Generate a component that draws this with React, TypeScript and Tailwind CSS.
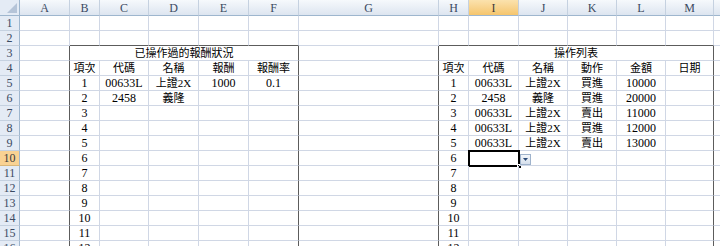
import React from "react";

const COLS = ["A", "B", "C", "D", "E", "F", "G", "H", "I", "J", "K", "L", "M", ""];
const ROWS = Array.from({ length: 16 }, (_, i) => i + 1);

const data: Record<string, string> = {
  B4: "項次", C4: "代碼", D4: "名稱", E4: "報酬", F4: "報酬率",
  B5: "1", C5: "00633L", D5: "上證2X", E5: "1000", F5: "0.1",
  B6: "2", C6: "2458", D6: "義隆",
  H4: "項次", I4: "代碼", J4: "名稱", K4: "動作", L4: "金額", M4: "日期",
  H5: "1", I5: "00633L", J5: "上證2X", K5: "買進", L5: "10000",
  H6: "2", I6: "2458", J6: "義隆", K6: "買進", L6: "20000",
  H7: "3", I7: "00633L", J7: "上證2X", K7: "賣出", L7: "11000",
  H8: "4", I8: "00633L", J8: "上證2X", K8: "買進", L8: "12000",
  H9: "5", I9: "00633L", J9: "上證2X", K9: "賣出", L9: "13000",
};
for (let r = 7; r <= 16; r++) data["B" + r] = String(r - 4);
for (let r = 10; r <= 16; r++) data["H" + r] = String(r - 4);

const hasCJK = (s: string) => /[\u3400-\u9fff]/.test(s);

function Txt({ t }: { t: string }) {
  return (
    <span className={hasCJK(t) ? "text-[11px] leading-none whitespace-nowrap" : "text-[12px] leading-none whitespace-nowrap"}>
      {t}
    </span>
  );
}

function ColHeader({ c }: { c: string }) {
  const sel = c === "I";
  return (
    <div
      className={
        sel
          ? "flex items-center justify-center border-r border-b border-r-[#c5cfdc] border-b-[#9eb6ce] bg-gradient-to-b from-[#fbe2ad] to-[#f5c56c] text-[12px] text-[#3b3b3b]"
          : "flex items-center justify-center border-r border-b border-r-[#c5d1e0] border-b-[#9eb6ce] bg-gradient-to-b from-[#f6f9fc] to-[#dde5f0] text-[12px] text-[#3b4a62]"
      }
    >
      {c}
    </div>
  );
}

function RowHeader({ r }: { r: number }) {
  const sel = r === 10;
  return (
    <div
      className={
        sel
          ? "flex items-center justify-center border-r border-b border-r-[#9eb6ce] border-b-[#d9b77a] bg-[#f9d293] text-[12px] text-[#3b3b3b]"
          : "flex items-center justify-center border-r border-b border-r-[#9eb6ce] border-b-[#c5d1e0] bg-[#e4ebf5] text-[12px] text-[#3b4a62]"
      }
    >
      {r}
    </div>
  );
}

const DARK_RIGHT = new Set(["A", "F", "G", "M"]);
const BOX_COLS = new Set(["B", "C", "D", "E", "F", "H", "I", "J", "K", "L", "M"]);

function Cell({ c, r }: { c: string; r: number }) {
  const darkR = r >= 3 && DARK_RIGHT.has(c);
  const darkB = r === 2 && BOX_COLS.has(c);
  const t = data[c + r];
  const active = c === "I" && r === 10;
  return (
    <div
      className={
        "relative flex items-center justify-center border-r border-b text-black " +
        (darkR ? "border-r-[#5c5c5c] " : "border-r-[#d0d7e5] ") +
        (darkB ? "border-b-[#5c5c5c]" : "border-b-[#d0d7e5]")
      }
    >
      {t ? <Txt t={t} /> : null}
      {active ? (
        <>
          <div className="absolute -left-px -top-px h-[17px] w-[52px] border-2 border-black" />
          <div className="absolute left-[48px] top-[13px] h-[5px] w-[5px] border border-white bg-black" />
          <div className="absolute left-[51px] top-[3px] flex h-[11px] w-[11px] items-center justify-center border border-[#9fb3cc] bg-gradient-to-b from-[#f4f7fb] to-[#d5dfec]">
            <svg width="5" height="3" viewBox="0 0 5 3">
              <path d="M0 0 L5 0 L2.5 3 Z" fill="#2b4a78" />
            </svg>
          </div>
        </>
      ) : null}
    </div>
  );
}

function MergedTitle({ t, span }: { t: string; span: "5" | "6" }) {
  return (
    <div
      className={
        "flex items-center justify-center border-r border-b border-r-[#5c5c5c] border-b-[#d0d7e5] text-black " +
        (span === "5" ? "col-span-5" : "col-span-6")
      }
    >
      <Txt t={t} />
    </div>
  );
}

export default function App() {
  const cells: React.ReactNode[] = [];
  // header row
  cells.push(
    <div key="corner" className="relative border-r border-b border-r-[#9eb6ce] border-b-[#9eb6ce] bg-[#e4ebf5]">
      <svg className="absolute bottom-[2px] right-[2px]" width="10" height="10" viewBox="0 0 10 10">
        <path d="M10 0 L10 10 L0 10 Z" fill="#b5c4d8" />
      </svg>
    </div>
  );
  COLS.forEach((c, i) => cells.push(<ColHeader key={"h" + i} c={c} />));
  ROWS.forEach((r) => {
    cells.push(<RowHeader key={"r" + r} r={r} />);
    if (r === 3) {
      cells.push(<Cell key="A3" c="A" r={3} />);
      cells.push(<MergedTitle key="B3" t="已操作過的報酬狀況" span="5" />);
      cells.push(<Cell key="G3" c="G" r={3} />);
      cells.push(<MergedTitle key="H3" t="操作列表" span="6" />);
      cells.push(<Cell key="N3" c="" r={3} />);
    } else {
      COLS.forEach((c, i) => cells.push(<Cell key={c + r + "_" + i} c={c} r={r} />));
    }
  });

  return (
    <div className="h-[246px] w-[720px] overflow-hidden bg-white font-['Liberation_Serif','Noto_Sans_CJK_TC',serif]">
      <div className="grid w-[740px] grid-cols-[20px_50px_30px_49px_50px_50px_50px_140px_30px_50px_49px_49px_49px_48px_26px] grid-rows-[16px_repeat(16,15px)]">
        {cells}
      </div>
    </div>
  );
}
